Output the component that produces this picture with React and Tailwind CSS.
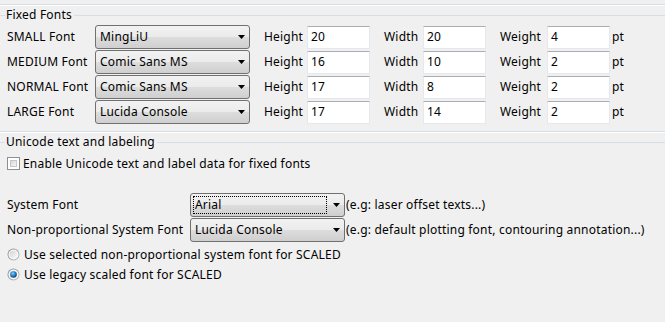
import React from "react";

const FONT = "font-['Noto_Sans',sans-serif]";

function Arrow() {
  return (
    <svg width="7" height="4" viewBox="0 0 7 4" className="shrink-0">
      <path d="M0 0H7L3.5 4Z" fill="#000" />
    </svg>
  );
}

function Combo({ value, focused, w = "w-[155px]" }) {
  return (
    <div
      className={`${w} h-[24px] shrink-0 flex items-center rounded-[3px] border border-[#707070] bg-[linear-gradient(#f2f2f2_0%,#ebebeb_50%,#dddddd_50%,#cfcfcf_100%)]`}
    >
      {focused ? (
        <div className="flex-1 self-stretch m-[2px] border border-dotted border-black flex items-center pl-[1px] leading-[16px]">
          {value}
        </div>
      ) : (
        <div className="flex-1 pl-[4px] leading-[16px]">{value}</div>
      )}
      <div className="mr-[4px] ml-[4px] flex items-center">
        <Arrow />
      </div>
    </div>
  );
}

function Input({ value }) {
  return (
    <div className="w-[63px] h-[23px] shrink-0 bg-white border border-[#e3e9ef] border-t-[#abadb3] flex items-center pl-[3px] leading-[16px]">
      {value}
    </div>
  );
}

function Legend({ text }) {
  return (
    <div className="flex items-center h-[14px]">
      <div className="w-[5px] h-px bg-[#d5dfe5]" />
      <div className="pl-[1px] pr-[2px] leading-[14px]">{text}</div>
      <div className="flex-1 h-px bg-[#d5dfe5]" />
    </div>
  );
}

function FontRow({ label, font, h, w, wt }) {
  return (
    <div className="flex items-center h-[24px]">
      <div className="w-[95px] pl-[7px] shrink-0 leading-[16px]">{label}</div>
      <Combo value={font} />
      <div className="ml-[14px] w-[43px] shrink-0 leading-[16px]">Height</div>
      <Input value={h} />
      <div className="ml-[14px] w-[39px] shrink-0 leading-[16px]">Width</div>
      <Input value={w} />
      <div className="ml-[14px] w-[47px] shrink-0 leading-[16px]">Weight</div>
      <Input value={wt} />
      <div className="ml-[2px] leading-[16px]">pt</div>
    </div>
  );
}

function Checkbox() {
  return (
    <div className="w-[13px] h-[13px] border border-[#8e8f8f] bg-white p-[2px] shrink-0">
      <div className="w-full h-full border border-[#c6c6c6] bg-[linear-gradient(135deg,#d8d8d8,#f6f6f6)]" />
    </div>
  );
}

function Radio({ checked }) {
  return (
    <svg width="13" height="13" viewBox="0 0 13 13" className="shrink-0">
      <defs>
        <linearGradient id="rb" x1="0" y1="0" x2="1" y2="1">
          <stop offset="0" stopColor="#8a8a8a" />
          <stop offset="1" stopColor="#c0c0c0" />
        </linearGradient>
        <linearGradient id="rf" x1="0" y1="0" x2="1" y2="1">
          <stop offset="0" stopColor="#d4d4d4" />
          <stop offset="1" stopColor="#fafafa" />
        </linearGradient>
        <radialGradient id="rd" cx="0.4" cy="0.35" r="0.7">
          <stop offset="0" stopColor="#8fd2f5" />
          <stop offset="0.45" stopColor="#2a8ad4" />
          <stop offset="1" stopColor="#0c3a6e" />
        </radialGradient>
      </defs>
      <circle cx="6.5" cy="6.5" r="6" fill="url(#rb)" />
      <circle cx="6.5" cy="6.5" r="5" fill="#fff" />
      <circle cx="6.5" cy="6.5" r="4" fill="url(#rf)" />
      {checked && <circle cx="6.5" cy="6.5" r="3.3" fill="url(#rd)" />}
    </svg>
  );
}

export default function App() {
  return (
    <div
      className={`w-[665px] h-[322px] bg-[#f0f0f0] overflow-hidden text-[12px] tracking-[0.2px] text-black ${FONT}`}
    >
      <div className="h-[4px]" />
      <div className="h-px bg-[#d5dfe5]" />
      <div className="h-px bg-white" />
      <div className="h-[2px]" />
      <Legend text="Fixed Fonts" />
      <div className="mt-[3px] flex flex-col gap-[1px]">
        <FontRow label="SMALL Font" font="MingLiU" h="20" w="20" wt="4" />
        <FontRow label="MEDIUM Font" font="Comic Sans MS" h="16" w="10" wt="2" />
        <FontRow label="NORMAL Font" font="Comic Sans MS" h="17" w="8" wt="2" />
        <FontRow label="LARGE Font" font="Lucida Console" h="17" w="14" wt="2" />
      </div>
      <div className="mt-[7px] h-px bg-[#d5dfe5]" />
      <div className="h-px bg-white" />
      <div className="h-[2px]" />
      <Legend text="Unicode text and labeling" />
      <div className="mt-[8px] flex items-center h-[13px] pl-[7px]">
        <Checkbox />
        <div className="ml-[3px] leading-[16px]">
          Enable Unicode text and label data for fixed fonts
        </div>
      </div>
      <div className="mt-[23px] flex flex-col gap-[1px]">
        <div className="flex items-center h-[24px]">
          <div className="w-[190px] pl-[7px] shrink-0 leading-[16px]">System Font</div>
          <Combo value="Arial" focused />
          <div className="ml-[1px] leading-[16px]">(e.g: laser offset texts...)</div>
        </div>
        <div className="flex items-center h-[24px]">
          <div className="w-[190px] pl-[7px] shrink-0 leading-[16px]">
            Non-proportional System Font
          </div>
          <Combo value="Lucida Console" />
          <div className="ml-[1px] leading-[16px]">
            (e.g: default plotting font, contouring annotation...)
          </div>
        </div>
      </div>
      <div className="mt-[6px] flex items-center h-[13px] pl-[7px]">
        <Radio />
        <div className="ml-[4px] leading-[16px]">
          Use selected non-proportional system font for SCALED
        </div>
      </div>
      <div className="mt-[7px] flex items-center h-[13px] pl-[7px]">
        <Radio checked />
        <div className="ml-[4px] leading-[16px]">Use legacy scaled font for SCALED</div>
      </div>
    </div>
  );
}
